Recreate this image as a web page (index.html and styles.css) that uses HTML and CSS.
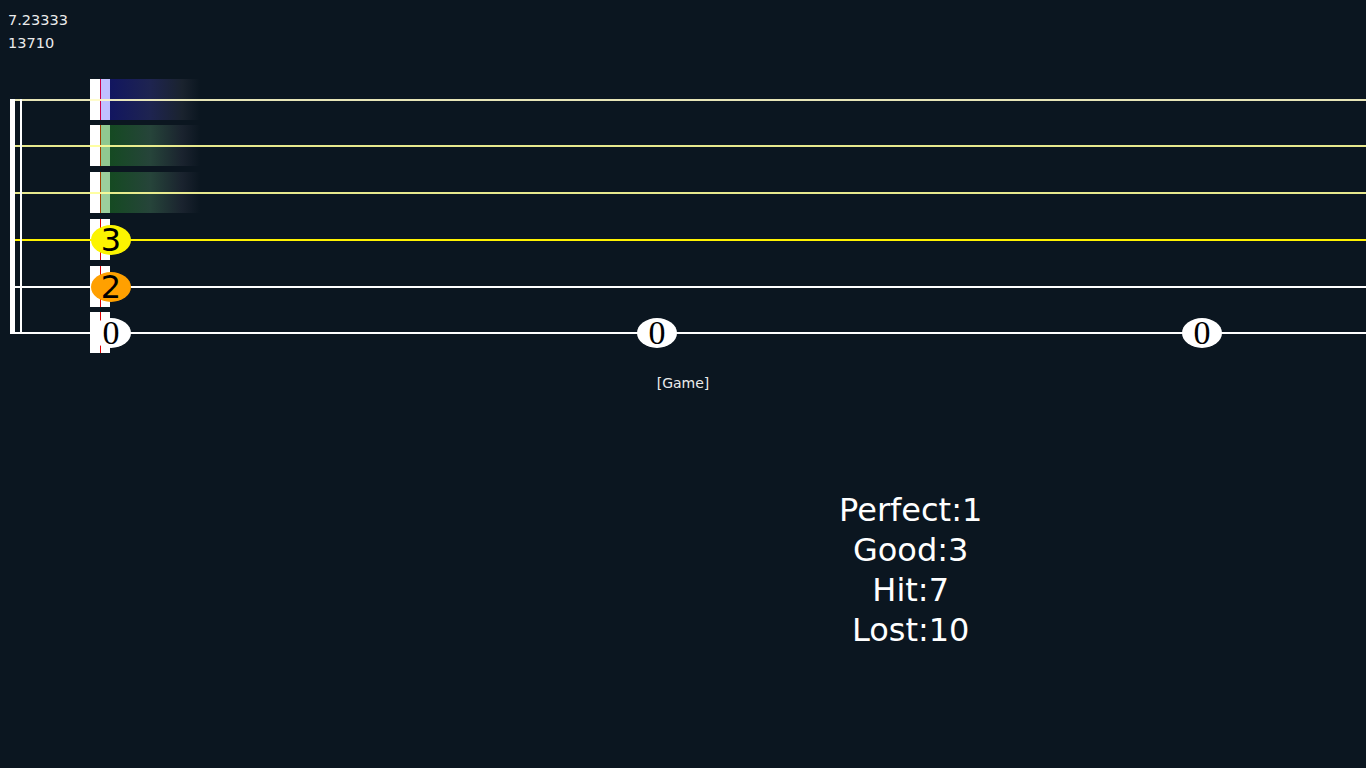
FILE: index.html
```html
<!DOCTYPE html>
<html>
<head>
<meta charset="utf-8">
<title>Game</title>
<link rel="stylesheet" href="styles.css">
</head>
<body>
<div class="hud">
  <div class="hud-line">7.23333</div>
  <div class="hud-line">13710</div>
</div>

<div class="track">
  <div class="bracket"></div>

  <div class="lane lane-1 tall-46">
    <div class="hit"></div>
    <div class="glow"></div>
    <div class="line"></div>
  </div>
  <div class="lane lane-2 tall-47">
    <div class="hit"></div>
    <div class="glow"></div>
    <div class="line"></div>
  </div>
  <div class="lane lane-3 tall-47">
    <div class="hit"></div>
    <div class="glow"></div>
    <div class="line"></div>
  </div>
  <div class="lane lane-4 tall-47">
    <div class="hit"></div>
    <div class="line"></div>
    <div class="note note-yellow" style="left:81px">3</div>
  </div>
  <div class="lane lane-5 tall-46">
    <div class="hit"></div>
    <div class="line"></div>
    <div class="note note-orange" style="left:81px">2</div>
  </div>
  <div class="lane lane-6 tall-47">
    <div class="hit"></div>
    <div class="line"></div>
    <div class="note note-white" style="left:81px">0</div>
    <div class="note note-white" style="left:627px">0</div>
    <div class="note note-white" style="left:1172px">0</div>
  </div>
</div>

<div class="label">[Game]</div>

<div class="stats">
  <div class="stat">Perfect:1</div>
  <div class="stat">Good:3</div>
  <div class="stat">Hit:7</div>
  <div class="stat">Lost:10</div>
</div>
</body>
</html>
```

FILE: styles.css
```css
html, body {
  margin: 0;
  padding: 0;
  background: #0b1620;
  width: 1366px;
  height: 768px;
  overflow: hidden;
  font-family: "DejaVu Sans", Verdana, sans-serif;
  color: #f2f2f2;
}

.hud {
  padding: 9px 0 0 8px;
  font-size: 14.5px;
  line-height: 23px;
  color: #ececec;
}

.track {
  position: relative;
  margin: 22px 0 0 10px;
  display: flex;
  flex-direction: column;
}

.bracket {
  position: absolute;
  left: 0;
  top: 22px;
  width: 5px;
  height: 235px;
  border-left: 5px solid #ffffff;
  border-right: 2px solid #ffffff;
  z-index: 3;
}

.lane {
  position: relative;
  display: grid;
  grid-template-columns: 1fr;
  grid-template-rows: 1fr;
  --line: #ffffff;
  --mark: #e00000;
  --strip: #ffffff;
  --glow: #121660;
  --glow-mid: #1d2244;
}

.tall-46 { height: 46px; }
.tall-47 { height: 47px; }

.lane > .hit,
.lane > .glow,
.lane > .line {
  grid-area: 1 / 1;
}

.hit {
  align-self: start;
  justify-self: start;
  margin: 2px 0 0 80px;
  width: 20px;
  height: 41px;
  background: linear-gradient(90deg, #ffffff 0 10px, var(--mark) 10px 11px, var(--strip) 11px 20px);
}

.glow {
  align-self: start;
  justify-self: start;
  margin: 2px 0 0 100px;
  width: 90px;
  height: 41px;
  background: linear-gradient(90deg, var(--glow) 0%, var(--glow-mid) 45%, rgba(30, 38, 50, 0.8) 80%, rgba(11, 22, 32, 0) 100%);
}

.line {
  align-self: start;
  margin-top: 22px;
  height: 2px;
  background: var(--line);
  opacity: 0.9;
  z-index: 1;
}

.lane-1 {
  --line: #fffcc8;
  --mark: #cc0048;
  --strip: #c0c0ff;
  --glow: #121660;
  --glow-mid: #1e2450;
}
.lane-2 {
  --line: #ffff99;
  --mark: #a04000;
  --strip: #90c890;
  --glow: #154a22;
  --glow-mid: #26443a;
}
.lane-3 {
  --line: #ffff99;
  --mark: #a04000;
  --strip: #9ccf9c;
  --glow: #154a22;
  --glow-mid: #26443a;
}
.lane-4 {
  --line: #fff200;
}
.lane-5,
.lane-6 {
  --line: #ffffff;
}
.lane-4 .line,
.lane-5 .line,
.lane-6 .line {
  opacity: 1;
}

.note {
  position: absolute;
  top: 8px;
  width: 40px;
  height: 30px;
  border-radius: 50%;
  display: flex;
  align-items: center;
  justify-content: center;
  font-family: "DejaVu Sans", sans-serif;
  font-size: 32px;
  line-height: 28px;
  color: #000000;
  z-index: 2;
}

.note-yellow { background: #fcf400; }
.note-orange { background: #ffa000; }
.note-white {
  background: #ffffff;
  font-family: "Liberation Serif", serif;
  font-size: 34px;
}

.label {
  margin-top: 16px;
  text-align: center;
  font-size: 14px;
  line-height: 20px;
  color: #ececec;
}

.stats {
  margin: 97px 0 0 33.3333%;
  display: flex;
  flex-direction: column;
  align-items: center;
  font-size: 32px;
  line-height: 40px;
  color: #ffffff;
}
```
